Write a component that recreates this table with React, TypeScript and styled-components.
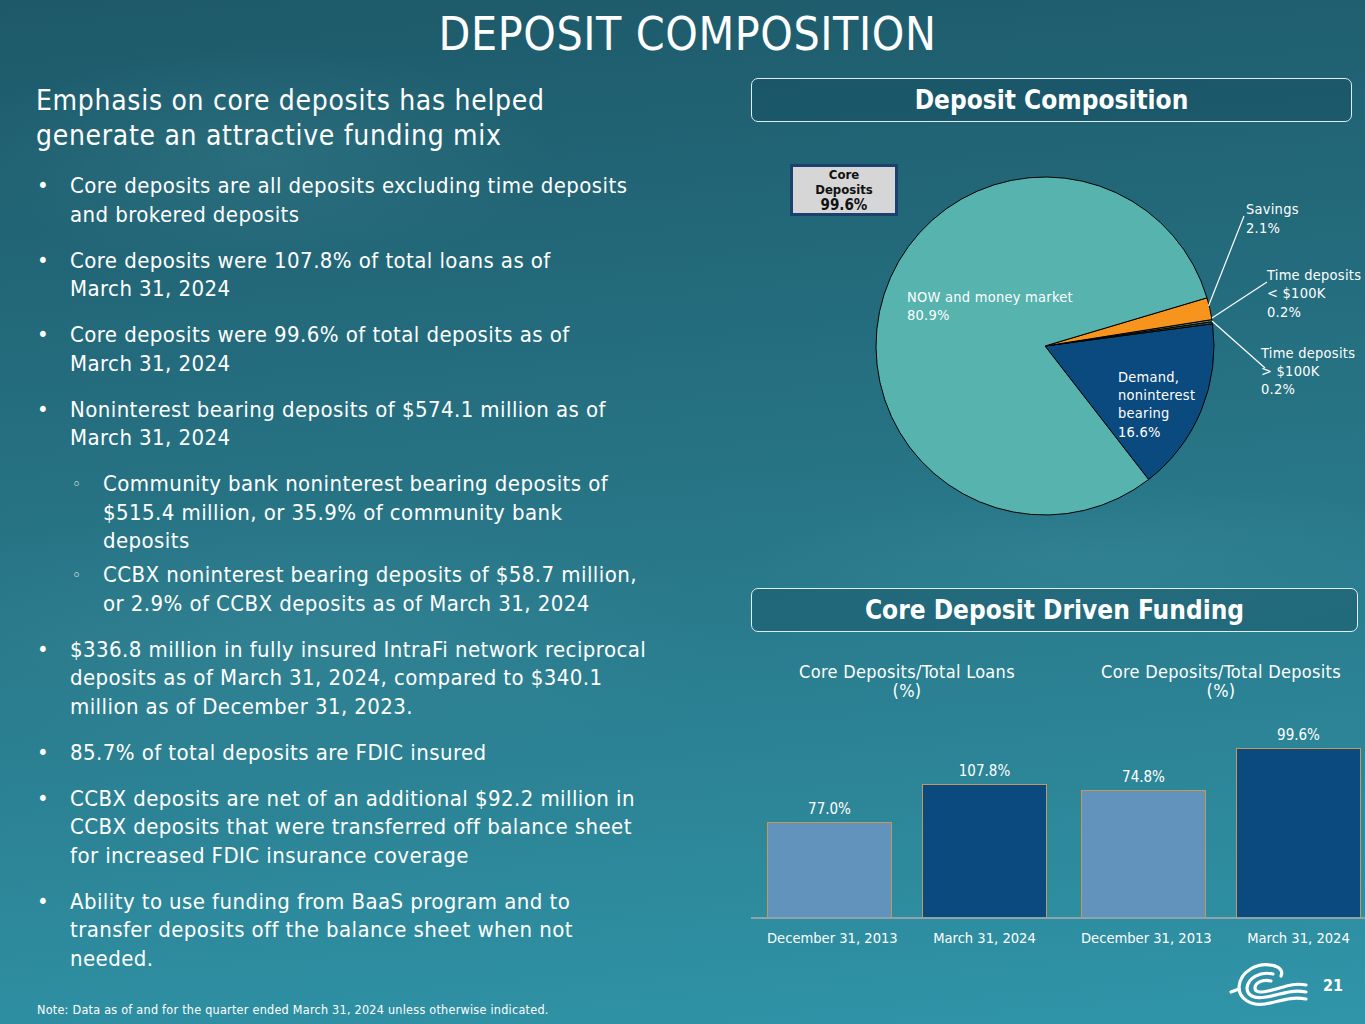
import React from "react";
import styled, { createGlobalStyle } from "styled-components";

const GlobalStyle = createGlobalStyle`
  html, body { margin: 0; padding: 0; }
  body { background: #1f5e6f; }
`;

const FONT = `"DejaVu Sans Condensed", "DejaVu Sans", "Liberation Sans", sans-serif`;

const slices = [
  { name: "demand", from: -7.56, to: 52.2, color: "#0b4a7f" },
  { name: "timeBig", from: -8.28, to: -7.56, color: "#2d5b4c" },
  { name: "timeSmall", from: -9.0, to: -8.28, color: "#6f8a5f" },
  { name: "savings", from: -16.56, to: -9.0, color: "#f7941d" },
  { name: "now", from: 52.2, to: 343.44, color: "#56b3ae" },
];

const bulletItems = [
  { sub: false, lines: ["Core deposits are all deposits excluding time deposits", "and brokered deposits"] },
  { sub: false, lines: ["Core deposits were 107.8% of total loans as of", "March 31, 2024"] },
  { sub: false, lines: ["Core deposits were 99.6% of total deposits as of", "March 31, 2024"] },
  { sub: false, lines: ["Noninterest bearing deposits of $574.1 million as of", "March 31, 2024"] },
  {
    sub: true,
    lines: ["Community bank noninterest bearing deposits of", "$515.4 million, or 35.9% of community bank", "deposits"],
  },
  { sub: true, lines: ["CCBX noninterest bearing deposits of $58.7 million,", "or 2.9% of CCBX deposits as of March 31, 2024"] },
  {
    sub: false,
    lines: [
      "$336.8 million in fully insured IntraFi network reciprocal",
      "deposits as of March 31, 2024, compared to $340.1",
      "million as of December 31, 2023.",
    ],
  },
  { sub: false, lines: ["85.7% of total deposits are FDIC insured"] },
  {
    sub: false,
    lines: [
      "CCBX deposits are net of an additional $92.2 million in",
      "CCBX deposits that were transferred off balance sheet",
      "for increased FDIC insurance coverage",
    ],
  },
  {
    sub: false,
    lines: ["Ability to use funding from BaaS program and to", "transfer deposits off the balance sheet when not", "needed."],
  },
];

const barGroups = [
  {
    title: ["Core Deposits/Total Loans", "(%)"],
    scale: 1.234,
    bars: [
      { label: "December 31, 2013", value: 77.0, dark: false },
      { label: "March 31, 2024", value: 107.8, dark: true },
    ],
  },
  {
    title: ["Core Deposits/Total Deposits", "(%)"],
    scale: 1.695,
    bars: [
      { label: "December 31, 2013", value: 74.8, dark: false },
      { label: "March 31, 2024", value: 99.6, dark: true },
    ],
  },
];

function slicePath(cx: number, cy: number, r: number, a0: number, a1: number) {
  const rad = (d: number) => (d * Math.PI) / 180;
  const x0 = cx + r * Math.cos(rad(a0));
  const y0 = cy + r * Math.sin(rad(a0));
  const x1 = cx + r * Math.cos(rad(a1));
  const y1 = cy + r * Math.sin(rad(a1));
  const large = a1 - a0 > 180 ? 1 : 0;
  return `M${cx} ${cy} L${x0} ${y0} A${r} ${r} 0 ${large} 1 ${x1} ${y1} Z`;
}

const PieChart = () => {
  const cx = 294;
  const cy = 224;
  const r = 169;
  return (
    <PieArea>
      <svg width="614" height="466" viewBox="0 0 614 466">
        {slices.map((s) => (
          <path key={s.name} d={slicePath(cx, cy, r, s.from, s.to)} fill={s.color} stroke="#000" strokeWidth="1" />
        ))}
        <g stroke="#fff" strokeWidth="1.2">
          <line x1="493" y1="94" x2="457.5" y2="184" />
          <line x1="516" y1="160" x2="461" y2="196" />
          <line x1="461" y1="199" x2="514" y2="246" />
        </g>
        <PieText>
          <text x="156" y="180">NOW and money market</text>
          <text x="156" y="198">80.9%</text>
          <text x="367" y="260">Demand,</text>
          <text x="367" y="278">noninterest</text>
          <text x="367" y="296">bearing</text>
          <text x="367" y="315">16.6%</text>
          <text x="495" y="92">Savings</text>
          <text x="495" y="111">2.1%</text>
          <text x="516" y="158">Time deposits</text>
          <text x="516" y="176">&lt; $100K</text>
          <text x="516" y="195">0.2%</text>
          <text x="510" y="236">Time deposits</text>
          <text x="510" y="254">&gt; $100K</text>
          <text x="510" y="272">0.2%</text>
        </PieText>
      </svg>
      <CoreBox>
        <span>Core</span>
        <span>Deposits</span>
        <CoreValue>99.6%</CoreValue>
      </CoreBox>
    </PieArea>
  );
};

const BarChart = () => (
  <ChartArea>
    <GroupRow>
      {barGroups.map((g) => (
        <GroupTitle key={g.title[0]}>
          {g.title[0]}
          <br />
          {g.title[1]}
        </GroupTitle>
      ))}
    </GroupRow>
    <BarsRow>
      {barGroups.map((g) => (
        <BarGroup key={g.title[0]}>
          {g.bars.map((b) => (
            <BarCol key={b.label}>
              <BarValue>{b.value.toFixed(1)}%</BarValue>
              <Bar $dark={b.dark} style={{ height: Math.round(b.value * g.scale) }} />
            </BarCol>
          ))}
        </BarGroup>
      ))}
    </BarsRow>
    <GroupRow>
      {barGroups.map((g) => (
        <BarGroup key={g.title[0]}>
          {g.bars.map((b) => (
            <BarLabel key={b.label}>{b.label}</BarLabel>
          ))}
        </BarGroup>
      ))}
    </GroupRow>
  </ChartArea>
);

const Logo = () => (
  <svg width="80" height="48" viewBox="0 0 80 48" fill="none" stroke="#fff" strokeWidth="3.2" strokeLinecap="round">
    <path d="M46 5 C28 0 11 11 10 26 C10 38 22 45 36 43 C50 41 60 35 77 38" />
    <path d="M46 5 C52 7 54 11 52 15" />
    <path d="M44 13 C31 10 19 17 18 27 C18 35 26 38 37 36 C51 34 61 28 77 31" />
    <path d="M42 20 C33 18 26 22 26 27 C26 31 31 32 39 30 C52 28 62 21 77 24" />
    <path d="M10 28 L2 31" />
  </svg>
);

export default function App() {
  return (
    <>
      <GlobalStyle />
      <Slide>
        <Title>DEPOSIT COMPOSITION</Title>
        <Main>
          <Left>
            <Heading>
              Emphasis on core deposits has helped
              <br />
              generate an attractive funding mix
            </Heading>
            <BulletList>
              {bulletItems.map((b, i) => (
                <Item key={i} $sub={b.sub} $tight={b.sub && i > 0 && bulletItems[i - 1].sub} $first={i === 0}>
                  <Marker $sub={b.sub}>{b.sub ? "◦" : "•"}</Marker>
                  <ItemText>
                    {b.lines.map((l) => (
                      <Line key={l}>{l}</Line>
                    ))}
                  </ItemText>
                </Item>
              ))}
            </BulletList>
          </Left>
          <Right>
            <SectionHeader $width={601}>Deposit Composition</SectionHeader>
            <PieChart />
            <SectionHeader $width={607}>Core Deposit Driven Funding</SectionHeader>
            <BarChart />
          </Right>
        </Main>
        <Footer>
          <Note>Note: Data as of and for the quarter ended March 31, 2024 unless otherwise indicated.</Note>
          <Brand>
            <Logo />
            <PageNum>21</PageNum>
          </Brand>
        </Footer>
      </Slide>
    </>
  );
}

const Slide = styled.div`
  width: 1365px;
  height: 1024px;
  display: flex;
  flex-direction: column;
  overflow: hidden;
  color: #fff;
  font-family: ${FONT};
  background:
    radial-gradient(ellipse 420px 160px at 260px 160px, rgba(60, 130, 145, 0.35), transparent 70%),
    radial-gradient(ellipse 500px 120px at 1100px 560px, rgba(70, 150, 165, 0.25), transparent 70%),
    radial-gradient(ellipse 600px 200px at 300px 640px, rgba(70, 150, 165, 0.25), transparent 70%),
    linear-gradient(175deg, #1d5969 0%, #236a7b 30%, #287889 55%, #2c8597 75%, #3095a9 100%);
`;

const Title = styled.h1`
  margin: 0;
  height: 62px;
  padding: 6px 0 0 10px;
  box-sizing: border-box;
  font-size: 46px;
  line-height: 56px;
  font-weight: 400;
  letter-spacing: 0.6px;
  text-align: center;
`;

const Main = styled.div`
  flex: 1;
  display: grid;
  grid-template-columns: 751px 1fr;
  min-height: 0;
`;

const Left = styled.div`
  padding: 21px 0 0 36px;
`;

const Heading = styled.h2`
  margin: 0 0 19px;
  font-size: 28px;
  line-height: 35px;
  font-weight: 400;
  letter-spacing: 0.7px;
`;

const BulletList = styled.ul`
  list-style: none;
  margin: 0;
  padding: 0;
`;

const Item = styled.li<{ $sub: boolean; $tight: boolean; $first: boolean }>`
  display: flex;
  margin-top: ${(p) => (p.$first ? 0 : p.$tight ? 5.5 : 17.5)}px;
  padding-left: ${(p) => (p.$sub ? 36 : 0)}px;
  font-size: 22px;
  line-height: 28.5px;
`;

const Marker = styled.span<{ $sub: boolean }>`
  flex: 0 0 ${(p) => (p.$sub ? 31 : 33)}px;
  font-size: ${(p) => (p.$sub ? 17 : 22)}px;
  padding-left: ${(p) => (p.$sub ? 0 : 1)}px;
`;

const ItemText = styled.span`
  flex: 1;
  letter-spacing: 0.42px;
`;

const Line = styled.span`
  display: block;
  white-space: nowrap;
`;

const Right = styled.div`
  padding-top: 16px;
  display: flex;
  flex-direction: column;
`;

const SectionHeader = styled.div<{ $width: number }>`
  width: ${(p) => p.$width}px;
  height: 44px;
  box-sizing: border-box;
  border: 1.5px solid #dfeef1;
  border-radius: 7px;
  background: rgba(18, 70, 88, 0.35);
  display: flex;
  align-items: center;
  justify-content: center;
  font-size: 26px;
  font-weight: 700;
`;

const PieArea = styled.div`
  position: relative;
  height: 466px;
`;

const PieText = styled.g`
  font-family: ${FONT};
  font-size: 14.5px;
  letter-spacing: 0.25px;
  fill: #fff;
`;

const CoreBox = styled.div`
  position: absolute;
  left: 39px;
  top: 42px;
  width: 108px;
  height: 52px;
  box-sizing: border-box;
  border: 3px solid #1d416f;
  background: #d6d6d6;
  color: #111;
  display: flex;
  flex-direction: column;
  align-items: center;
  justify-content: center;
  font-size: 13px;
  font-weight: 700;
  line-height: 15px;
`;

const CoreValue = styled.span`
  font-size: 15px;
  line-height: 17px;
`;

const ChartArea = styled.div`
  display: flex;
  flex-direction: column;
  padding-top: 30px;
`;

const GroupRow = styled.div`
  display: flex;
  gap: 34px;
  padding-left: 16px;
`;

const GroupTitle = styled.div`
  width: 280px;
  font-size: 18px;
  line-height: 19px;
  letter-spacing: 0.3px;
  text-align: center;
  height: 40px;
`;

const BarsRow = styled.div`
  display: flex;
  gap: 34px;
  padding-left: 16px;
  height: 215px;
  border-bottom: 2px solid #8fa3a8;
`;

const BarGroup = styled.div`
  width: 280px;
  display: flex;
  gap: 30px;
  align-items: flex-end;
`;

const BarCol = styled.div`
  width: 125px;
  display: flex;
  flex-direction: column;
  align-items: center;
`;

const BarValue = styled.div`
  font-size: 15px;
  line-height: 18px;
  margin-bottom: 4px;
`;

const Bar = styled.div<{ $dark: boolean }>`
  width: 100%;
  box-sizing: border-box;
  background: ${(p) => (p.$dark ? "#0b4a7f" : "#6193bd")};
  border: 1.5px solid #c39a5c;
  border-bottom: none;
`;

const BarLabel = styled.div`
  width: 125px;
  margin-top: 10px;
  text-align: center;
  white-space: nowrap;
  font-size: 14.6px;
  line-height: 18px;
`;

const Footer = styled.div`
  height: 62px;
  display: flex;
  justify-content: space-between;
  align-items: flex-end;
`;

const Note = styled.div`
  padding: 0 0 7px 37px;
  font-size: 12.5px;
  line-height: 15px;
  letter-spacing: 0.25px;
`;

const Brand = styled.div`
  display: flex;
  align-items: center;
  gap: 14px;
  padding: 0 22px 15px 0;
`;

const PageNum = styled.div`
  font-size: 16px;
  font-weight: 700;
`;
